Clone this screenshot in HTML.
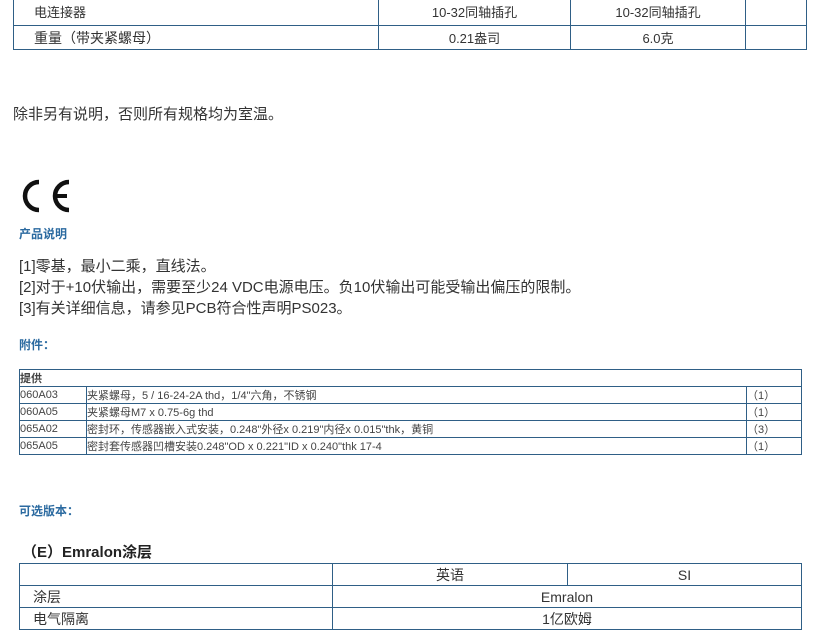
<!DOCTYPE html>
<html><head><meta charset="utf-8"><style>
body{margin:0;width:820px;height:643px;background:#fff;font-family:"Liberation Sans","Noto Sans CJK SC",sans-serif;color:#333;position:relative;overflow:hidden}
.a{position:absolute}
table{border-collapse:collapse;position:absolute}
td{border:1px solid #2f5f86;padding:0}
.blue{color:#2b6aa0;font-weight:bold;font-size:12px}
</style></head><body>
<table style="left:13px;top:-3px;width:794px;font-size:13px">
<tr style="height:28px"><td style="width:344px;padding-left:20px">电连接器</td><td style="width:191px;text-align:center">10-32同轴插孔</td><td style="width:174px;text-align:center">10-32同轴插孔</td><td></td></tr>
<tr style="height:24px"><td style="padding-left:20px;font-size:14px">重量（带夹紧螺母）</td><td style="text-align:center">0.21盎司</td><td style="text-align:center">6.0克</td><td></td></tr>
</table>
<div class="a" style="left:13px;top:103px;font-size:15px">除非另有说明，否则所有规格均为室温。</div>
<svg class="a" style="left:20px;top:178px" width="54" height="36" viewBox="0 0 54 36">
<path d="M19 4 A14 14 0 1 0 19 32" fill="none" stroke="#111" stroke-width="4.5"/>
<path d="M49 4 A14 14 0 1 0 49 32" fill="none" stroke="#111" stroke-width="4.5"/>
<line x1="36" y1="18" x2="47" y2="18" stroke="#111" stroke-width="4"/>
</svg>
<div class="a blue" style="left:19px;top:225px">产品说明</div>
<div class="a" style="left:19px;top:256px;font-size:15px;line-height:21px">[1]零基，最小二乘，直线法。<br>[2]对于+10伏输出，需要至少24 VDC电源电压。负10伏输出可能受输出偏压的限制。<br>[3]有关详细信息，请参见PCB符合性声明PS023。</div>
<div class="a blue" style="left:19px;top:336px">附件：</div>
<table style="left:19px;top:369px;width:783px;font-size:11px;color:#444">
<tr style="height:16px"><td colspan="3" style="font-weight:bold;font-size:11px">提供</td></tr>
<tr style="height:17px"><td style="width:66px">060A03</td><td>夹紧螺母，5 / 16-24-2A thd，1/4"六角，不锈钢</td><td style="width:54px">（1）</td></tr>
<tr style="height:17px"><td>060A05</td><td>夹紧螺母M7 x 0.75-6g thd</td><td>（1）</td></tr>
<tr style="height:17px"><td>065A02</td><td>密封环，传感器嵌入式安装，0.248"外径x 0.219"内径x 0.015"thk，黄铜</td><td>（3）</td></tr>
<tr style="height:17px"><td>065A05</td><td>密封套传感器凹槽安装0.248"OD x 0.221"ID x 0.240"thk 17-4</td><td>（1）</td></tr>
</table>
<div class="a blue" style="left:19px;top:502px">可选版本：</div>
<div class="a" style="left:22px;top:541px;font-size:15px;font-weight:bold;color:#222">（E）Emralon涂层</div>
<table style="left:19px;top:563px;width:783px;font-size:14px">
<tr style="height:22px"><td style="width:312px"></td><td style="width:234px;text-align:center">英语</td><td style="text-align:center">SI</td></tr>
<tr style="height:22px"><td style="padding-left:13px">涂层</td><td colspan="2" style="text-align:center">Emralon</td></tr>
<tr style="height:22px"><td style="padding-left:13px">电气隔离</td><td colspan="2" style="text-align:center">1亿欧姆</td></tr>
</table>
</body></html>
